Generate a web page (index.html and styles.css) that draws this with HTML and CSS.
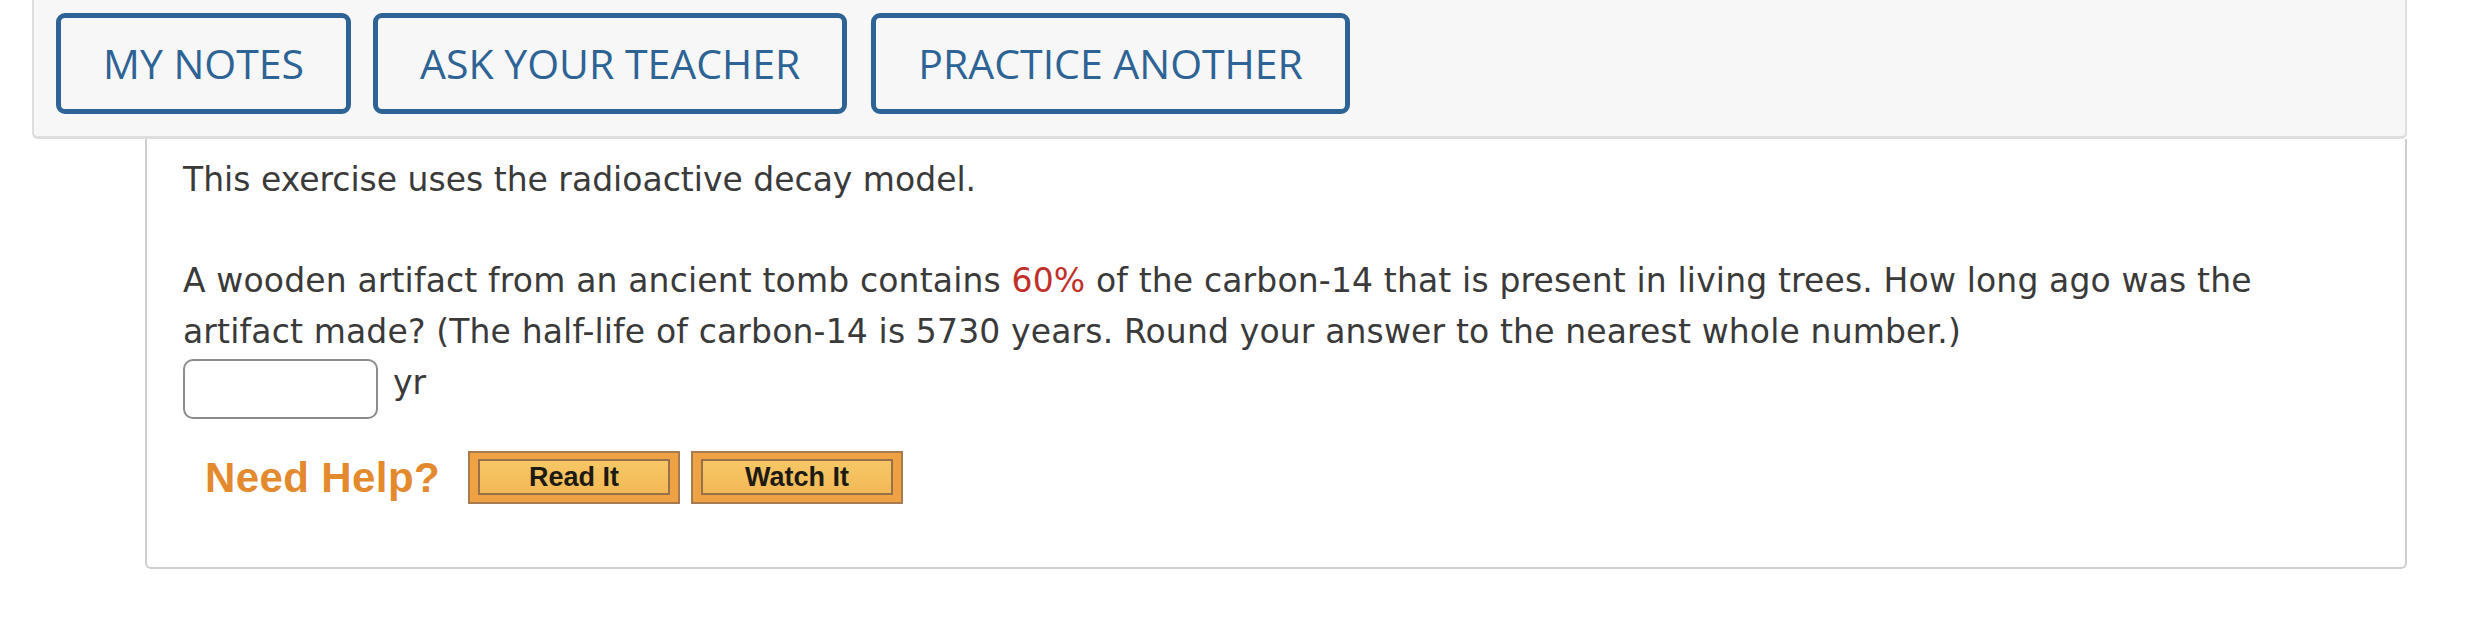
FILE: index.html
```html
<!DOCTYPE html>
<html>
<head>
<meta charset="utf-8">
<link rel="stylesheet" href="styles.css">
</head>
<body>
<div class="toolbar">
  <button class="tool-btn">MY NOTES</button>
  <button class="tool-btn">ASK YOUR TEACHER</button>
  <button class="tool-btn">PRACTICE ANOTHER</button>
</div>
<div class="question">
  <p class="intro">This exercise uses the radioactive decay model.</p>
  <p class="prompt">A wooden artifact from an ancient tomb contains <span class="value">60%</span> of the carbon-14 that is present in living trees. How long ago was the artifact made? (The half-life of carbon-14 is 5730 years. Round your answer to the nearest whole number.)</p>
  <div class="answer-row">
    <input class="answer" type="text">
    <span class="unit">yr</span>
  </div>
  <div class="help-row">
    <span class="need-help">Need Help?</span>
    <span class="help-btn"><span class="help-inner">Read It</span></span>
    <span class="help-btn"><span class="help-inner">Watch It</span></span>
  </div>
</div>
</body>
</html>
```
FILE: styles.css
```css
html, body {
  margin: 0;
  padding: 0;
  background: #ffffff;
}

.toolbar {
  margin-left: 32px;
  width: 2375px;
  height: 139px;
  box-sizing: border-box;
  background: #f7f7f7;
  border: 2px solid #dedede;
  border-bottom-width: 3px;
  border-top: none;
  border-radius: 0 0 6px 6px;
  padding: 13px 0 0 22px;
  display: flex;
  align-items: flex-start;
  gap: 22px;
}

.tool-btn {
  height: 101px;
  box-sizing: border-box;
  border: 5px solid #2e6395;
  border-radius: 9px;
  background: transparent;
  color: #2e6395;
  font-family: "Open Sans", sans-serif;
  font-size: 41px;
  font-weight: 500;
  padding: 0 42px;
  margin: 0;
  line-height: 1;
}

.tool-btn + .tool-btn + .tool-btn {
  margin-left: 2px;
}

.question {
  margin-left: 145px;
  width: 2262px;
  height: 430px;
  box-sizing: border-box;
  border: 2px solid #cfcfcf;
  border-top: none;
  border-radius: 0 0 6px 6px;
  padding: 16px 36px 0 36px;
  font-family: "DejaVu Sans", Verdana, sans-serif;
  font-size: 33px;
  line-height: 50.5px;
  color: #3a3a3a;
}

.question p {
  margin: 0;
}

.intro {
  margin-bottom: 50.5px !important;
}

.prompt {
  max-width: 2110px;
  letter-spacing: 0.15px;
}

.value {
  color: #c0302a;
}

.answer-row {
  display: flex;
  align-items: flex-start;
  gap: 15px;
  margin-top: 2px;
}

.answer {
  width: 195px;
  height: 60px;
  box-sizing: border-box;
  border: 2px solid #8c8c8c;
  border-radius: 10px;
  background: #ffffff;
  margin: 0;
  padding: 0 10px;
}

.unit {
  line-height: 1.164;
  margin-top: 5px;
}

.help-row {
  display: flex;
  align-items: center;
  margin-top: 32px;
  padding-left: 22px;
  gap: 11px;
}

.need-help {
  font-family: "Liberation Sans", Arial, sans-serif;
  font-weight: 700;
  font-size: 42px;
  line-height: 53px;
  color: #e38a2f;
  margin-right: 17px;
  letter-spacing: 0.4px;
}

.help-btn {
  display: flex;
  width: 212px;
  height: 53px;
  box-sizing: border-box;
  border: 2px solid #a67b50;
  background: #eea244;
  padding: 6px 8px 7px 8px;
}

.help-inner {
  flex: 1;
  display: flex;
  align-items: center;
  justify-content: center;
  border: 2px solid #96714c;
  background: linear-gradient(#f6c766, #f2b955);
  font-family: "Liberation Sans", Arial, sans-serif;
  font-weight: 700;
  font-size: 27px;
  color: #1d1a14;
}
```
